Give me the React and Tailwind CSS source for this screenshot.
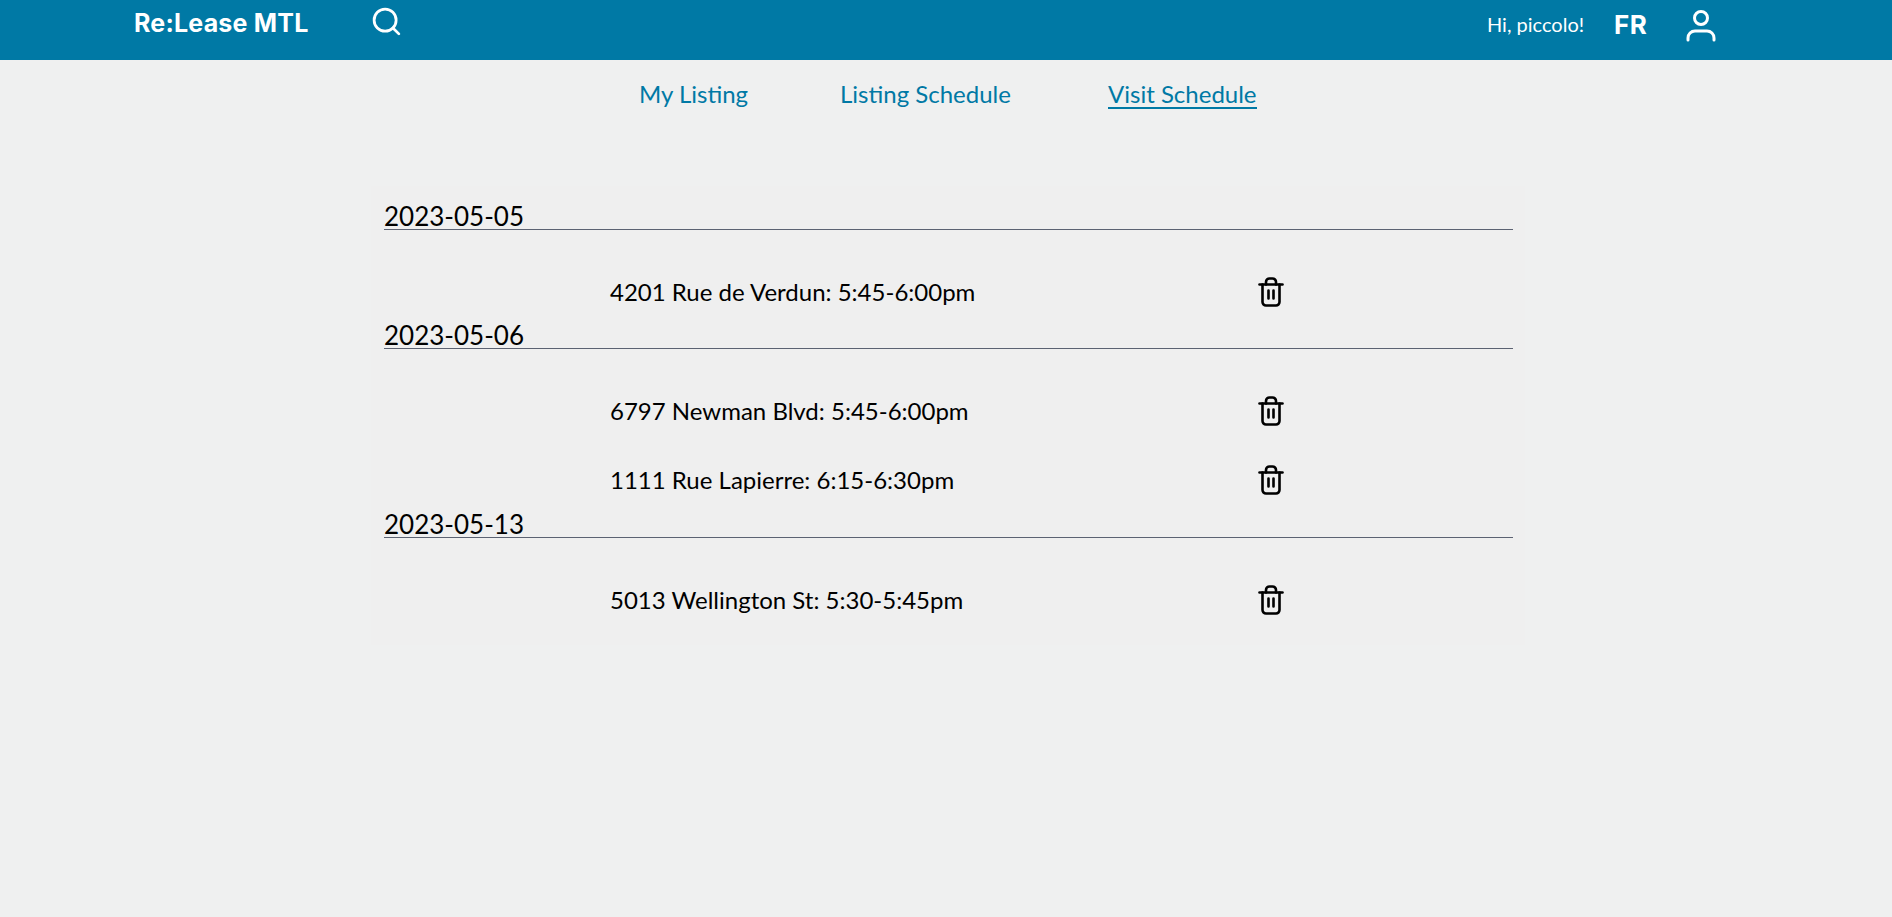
import { Search } from 'lucide-react'

const schedule = [
  { date: '2023-05-05', visits: ['4201 Rue de Verdun: 5:45-6:00pm'] },
  { date: '2023-05-06', visits: ['6797 Newman Blvd: 5:45-6:00pm', '1111 Rue Lapierre: 6:15-6:30pm'] },
  { date: '2023-05-13', visits: ['5013 Wellington St: 5:30-5:45pm'] },
]

const TrashIcon = () => (
  <svg width="26" height="30" viewBox="0 0 26 30" fill="none" stroke="black" strokeWidth="2.6" strokeLinecap="round" strokeLinejoin="round">
    <path d="M1.5 7.5h23" />
    <path d="M4.5 7.5V25a3.5 3.5 0 0 0 3.5 3.5h10a3.5 3.5 0 0 0 3.5-3.5V7.5" />
    <path d="M8 7.5V5a3.5 3.5 0 0 1 3.5-3.5h3A3.5 3.5 0 0 1 18 5v2.5" />
    <path d="M10.5 13.5v8M15.5 13.5v8" />
  </svg>
)

const UserIcon = () => (
  <svg width="30" height="32" viewBox="0 0 30 32" fill="none" stroke="white" strokeWidth="3" strokeLinecap="round" strokeLinejoin="round">
    <circle cx="15" cy="8" r="6.5" />
    <path d="M2 30v-2a7 7 0 0 1 7-7h12a7 7 0 0 1 7 7v2" />
  </svg>
)

const App = () => {
  return (
    <div className="min-h-[917px] bg-[#eff0f0] font-['Lato',sans-serif]">
      <header className="h-[60px] bg-[#0079a5] flex items-center text-white">
        <div className="ml-[134px] w-[238px] text-[25px] font-bold font-['Inter',sans-serif] tracking-[0.2px] -mt-[12px]">Re:Lease MTL</div>
        <Search size={33} strokeWidth={2} className="-mt-[17px] -ml-[2px]" />
        <div className="ml-auto flex items-center -mt-[12px]">
          <span className="text-[20px] w-[127px]">Hi, piccolo!</span>
          <span className="text-[26px] font-bold font-['Inter',sans-serif] tracking-[0.5px] w-[72px]">FR</span>
          <div className="mr-[176px] mt-[4px]">
            <UserIcon />
          </div>
        </div>
      </header>

      <nav className="flex pl-[639px] pt-[21px] text-[24px] leading-[26px] text-[#0079a5]">
        <a className="w-[201px]">My Listing</a>
        <a className="w-[268px]">Listing Schedule</a>
        <a className="border-b-2 border-[#0079a5]">Visit Schedule</a>
      </nav>

      <main className="ml-[371px] mt-[77px] w-[1154px] bg-[#efefef] pt-[21px] pb-[11px] pl-[13px]">
        {schedule.map((group) => (
          <section key={group.date}>
            <h2 className="w-[1129px] h-[22px] border-b border-[#5b6272] box-content text-[26px] leading-[18px] text-black">{group.date}</h2>
            <ul className="mt-[27.4px]">
              {group.visits.map((visit) => (
                <li key={visit} className="h-[69px] flex items-center pl-[226px] text-[24px] text-black">
                  <span className="w-[648px]">{visit}</span>
                  <TrashIcon />
                </li>
              ))}
            </ul>
          </section>
        ))}
      </main>
    </div>
  )
}

export default App
